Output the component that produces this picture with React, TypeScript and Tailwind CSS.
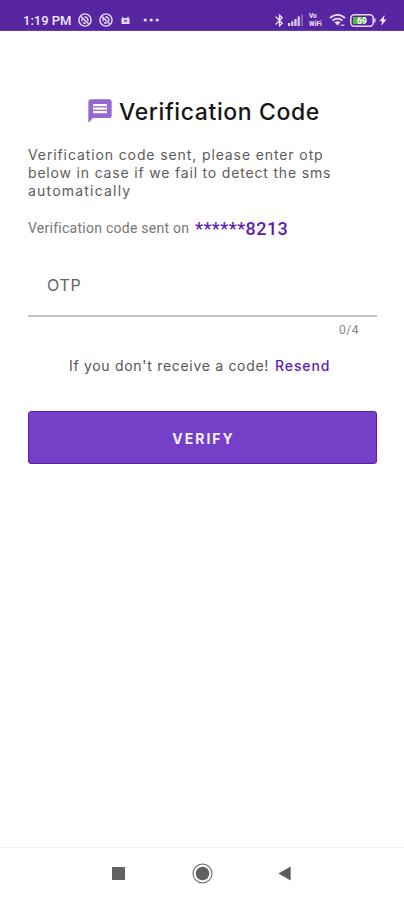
import { useState, type ReactNode } from "react";
import { MdBluetooth, MdMessage } from "react-icons/md";

const OTP_LENGTH = 4;

function MutedIcon() {
  return (
    <svg width="14" height="14" viewBox="0 0 14 14" fill="none" stroke="#e9dcf8">
      <circle cx="7" cy="7" r="6.1" strokeWidth="1.4" />
      <path d="M4.2 8.4a3.2 3.2 0 0 1 .6-3.6M6.4 4a3.2 3.2 0 0 1 3.4 4.2M3 3.4l7.6 7.4M5 9.8l2.8.4" strokeWidth="1.4" />
    </svg>
  );
}

function SignalIcon() {
  return (
    <svg width="16" height="12" viewBox="0 0 16 12" fill="#ddcff2">
      <path d="M0 9h2.2v3H0zM3.2 7.2h2.2V12H3.2zM6.4 5h2.2v7H6.4zM9.6 2.6h2.2V12H9.6z" />
      <path d="M13 .6h2V12h-2z" fillOpacity=".35" />
    </svg>
  );
}

function WifiIcon() {
  return (
    <svg width="17" height="13" viewBox="0 0 17 13" fill="none" stroke="#e6daf6">
      <path d="M1 4.2C5-.2 12-.2 16 4.2M3.6 6.7c2.8-2.7 7-2.7 9.8 0" strokeWidth="1.8" />
      <path d="M5.4 8.2c1.8-1.4 4.4-1.4 6.2 0L8.5 11.6z" fill="#e6daf6" stroke="none" />
      <path d="M11.6 11.2h3.8" strokeWidth="1.6" strokeOpacity=".75" />
    </svg>
  );
}

function BatteryIcon() {
  return (
    <svg width="27" height="13" viewBox="0 0 27 13">
      <rect x=".8" y=".8" width="22.4" height="11.4" rx="3.4" fill="none" stroke="#e6daf6" strokeWidth="1.5" />
      <path d="M24.2 3.8c2 .8 2 4.6 0 5.4z" fill="#e6daf6" />
      <rect x="3" y="3" width="12.5" height="7" rx="1" fill="#58b83c" />
      <text x="12" y="9.5" textAnchor="middle" fontSize="8.5" fontWeight="700" fill="#fff" fontFamily="Roboto, sans-serif">
        69
      </text>
    </svg>
  );
}

function StatusBar() {
  return (
    <header className="flex h-[31px] shrink-0 items-start border-b border-[#6a3dae] bg-[#5725a0] pl-[23px] pr-[17px] pt-[13px] text-[#f1e8fb]">
      <span className="w-[55px] whitespace-nowrap font-[Roboto,sans-serif] text-[13px] font-medium leading-[15px]">
        1:19 PM
      </span>
      <MutedIcon />
      <span className="ml-[7px]">
        <MutedIcon />
      </span>
      <svg className="ml-2 mt-0.5" width="9" height="10" viewBox="0 0 9 10" fill="#e6daf6">
        <path d="M.5 3h8v6h-8zM1.5 1l1 2h-1zM7.5.6 6 3h1.2z" />
        <path d="M3 4.6h3v2.6H3z" fill="#8d69c4" />
      </svg>
      <svg className="ml-[13px] mt-[5px]" width="17" height="4" viewBox="0 0 17 4" fill="#e9dcf8">
        <circle cx="2.2" cy="2" r="1.6" />
        <circle cx="8.2" cy="2" r="1.6" />
        <circle cx="14.2" cy="2" r="1.6" />
      </svg>
      <div className="ml-auto flex items-start">
        <MdBluetooth className="h-[15px] w-[15px]" />
        <span className="ml-px mt-px">
          <SignalIcon />
        </span>
        <span className="-mt-px ml-[5px] flex w-[16px] flex-col whitespace-nowrap font-[Roboto,sans-serif] text-[6.5px] font-bold leading-[8px]">
          <span>Vo</span>
          <span>WiFi</span>
        </span>
        <span className="ml-1 mt-px">
          <WifiIcon />
        </span>
        <span className="ml-1 mt-px">
          <BatteryIcon />
        </span>
        <svg className="ml-[2px] mt-0.5" width="8" height="11" viewBox="0 0 8 11" fill="#f1e8fb">
          <path d="M5.6 0 .4 6.2h2.8L2 11l5.6-6.6H4.8z" />
        </svg>
      </div>
    </header>
  );
}

function NavButton({ label, children }: { label: string; children: ReactNode }) {
  return (
    <button aria-label={label} className="flex h-6 w-6 items-center justify-center">
      {children}
    </button>
  );
}

function NavBar() {
  return (
    <nav className="flex h-[53px] shrink-0 items-center justify-center gap-[59px] border-t border-[#f1f1f1] pb-px">
      <NavButton label="Recent apps">
        <span className="mr-px h-[13px] w-[13px] bg-[#626262]" />
      </NavButton>
      <NavButton label="Home">
        <svg width="21" height="21" viewBox="0 0 21 21">
          <circle cx="10.5" cy="10.5" r="9.5" fill="none" stroke="#666" strokeWidth="1.1" />
          <circle cx="10.5" cy="10.5" r="6.8" fill="#606060" />
        </svg>
      </NavButton>
      <NavButton label="Back">
        <svg className="mr-px" width="13" height="15" viewBox="0 0 13 15" fill="#5c5c5c">
          <path d="M12.6.4v14.2L.4 7.5z" />
        </svg>
      </NavButton>
    </nav>
  );
}

export default function App() {
  const [otp, setOtp] = useState("");

  return (
    <div className="flex h-[900px] w-[404px] flex-col overflow-hidden bg-white font-[Inter,sans-serif]">
      <StatusBar />

      <main className="flex flex-1 flex-col pl-7 pr-[27px]">
        <div className="mt-[64px] flex h-8 items-center pl-[58px]">
          <MdMessage className="-mt-px h-7 w-7 shrink-0 text-[#9567d3]" />
          <h1 className="ml-[5px] whitespace-nowrap pt-0.5 text-[23px] font-medium tracking-[0.6px] text-[#161616]">
            Verification Code
          </h1>
        </div>

        <p className="mt-[19px] whitespace-nowrap text-[14px] leading-[18px] tracking-[0.82px] text-[#5c5c5c]">
          <span className="tracking-[0.89px]">Verification code sent, please enter otp</span>
          <br />
          below in case if we fail to detect the sms
          <br />
          <span className="tracking-[1.2px]">automatically</span>
        </p>

        <div className="mt-4 flex h-6 items-center whitespace-nowrap font-[Roboto,sans-serif]">
          <span className="w-[167px] text-[14px] tracking-[0.26px] text-[#777]">Verification code sent on</span>
          <span className="text-[18px] font-medium tracking-[0.45px] text-[#5a1db0]">******8213</span>
        </div>

        <label className="mt-[14px] flex h-[63px] items-center border-b-2 border-[#c4c4c4] pl-[19px] pt-px">
          <input
            value={otp}
            maxLength={OTP_LENGTH}
            onChange={(e) => setOtp(e.target.value)}
            placeholder="OTP"
            className="w-full text-[16px] tracking-[0.7px] text-[#333] outline-none placeholder:text-[#626262]"
          />
        </label>
        <p className="mt-[5px] pr-[18px] text-right font-[Roboto,sans-serif] text-[12px] leading-4 tracking-[0.5px] text-[#858585]">
          {otp.length}/{OTP_LENGTH}
        </p>

        <p className="mt-[18px] flex whitespace-nowrap pl-[41px] text-[14px] leading-5 text-[#555]">
          <span className="w-[206px] tracking-[0.7px]">If you don&apos;t receive a code!</span>
          <button className="font-medium tracking-[0.9px] text-[#5a1db0]">Resend</button>
        </p>

        <button className="mt-[35px] h-[53px] rounded-[3px] border border-[#5b1cb3] bg-[#753fc8] pl-0.5 pt-px text-[14px] font-bold tracking-[2px] text-[#f7f0ff]">
          VERIFY
        </button>
      </main>

      <NavBar />
    </div>
  );
}
